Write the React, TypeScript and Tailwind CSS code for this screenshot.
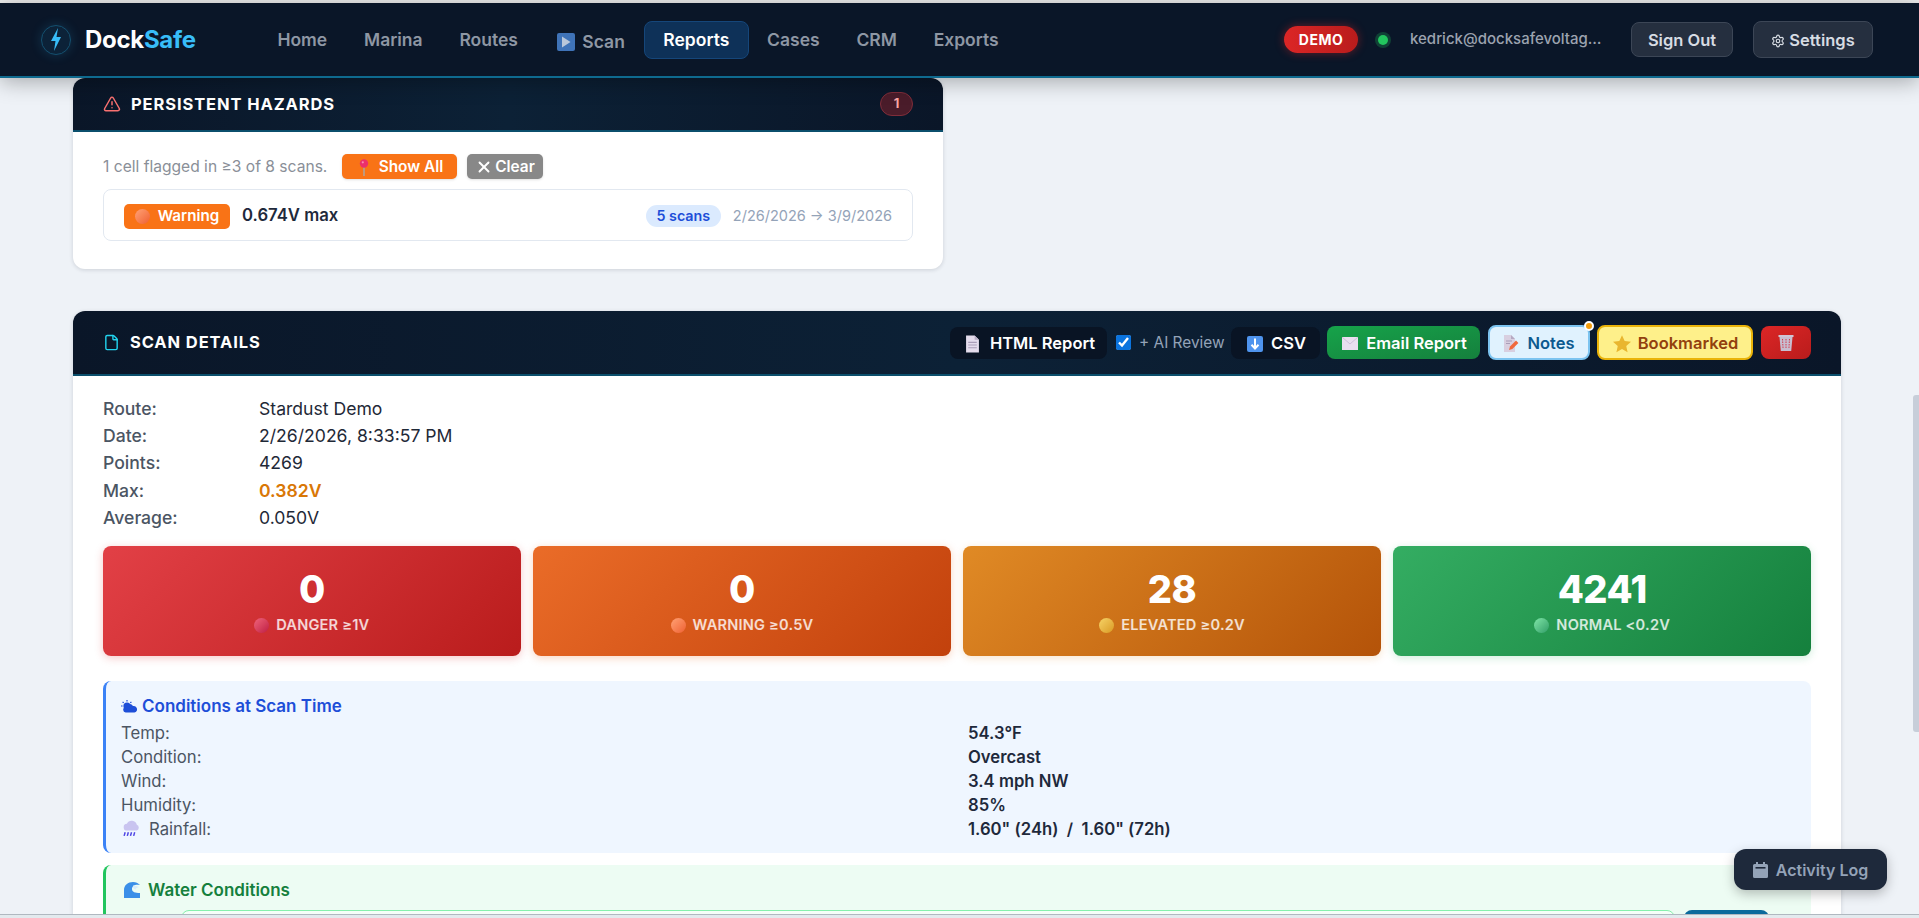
import { File, Settings, TriangleAlert, X } from 'lucide-react';

const navLinks = ['Cases', 'CRM', 'Exports'];

const scanRows = [
  { label: 'Route:', value: 'Stardust Demo', tone: 'text-[#1f2937]' },
  { label: 'Date:', value: '2/26/2026, 8:33:57 PM', tone: 'text-[#1f2937]' },
  { label: 'Points:', value: '4269', tone: 'text-[#1f2937]' },
  { label: 'Max:', value: '0.382V', tone: 'text-[#d97706] font-semibold' },
  { label: 'Average:', value: '0.050V', tone: 'text-[#1f2937]' },
];

const statCards = [
  { count: '0', label: 'DANGER ≥1V', card: 'bg-[linear-gradient(135deg,#e24046,#b91c1c)] shadow-[0_2px_8px_rgba(220,38,38,0.25)]', dot: 'from-[#f0627a] to-[#be1845]' },
  { count: '0', label: 'WARNING ≥0.5V', card: 'bg-[linear-gradient(135deg,#ea6c28,#c2410c)] shadow-[0_2px_8px_rgba(234,88,12,0.25)]', dot: 'from-[#ffa174] to-[#ee5f30]' },
  { count: '28', label: 'ELEVATED ≥0.2V', card: 'bg-[linear-gradient(135deg,#e08a25,#b45309)] shadow-[0_2px_8px_rgba(217,119,6,0.2)]', dot: 'from-[#f6d365] to-[#d99a1e]' },
  { count: '4241', label: 'NORMAL <0.2V', card: 'bg-[linear-gradient(135deg,#34ad62,#15803d)] shadow-[0_2px_8px_rgba(22,163,74,0.2)]', dot: 'from-[#7fe6a8] to-[#2f9e68]' },
];

const weatherRows = [
  { label: 'Temp:', value: '54.3°F' },
  { label: 'Condition:', value: 'Overcast' },
  { label: 'Wind:', value: '3.4 mph NW' },
  { label: 'Humidity:', value: '85%' },
];

function BoltIcon() {
  return (
    <svg width="10" height="23" viewBox="0 0 10 23">
      <path d="M7 0 0 13h4.500L3 23l7-14H5.500z" fill="#38bdf8" />
    </svg>
  );
}

function PlayIcon() {
  return (
    <svg width="18" height="18" viewBox="0 0 18 18">
      <rect width="18" height="18" rx="2" fill="#3f73b8" />
      <path d="M5 3.500 13.500 9 5 14.500z" fill="#b9c7da" />
    </svg>
  );
}

function PinIcon() {
  return (
    <svg width="10" height="17" viewBox="0 0 10 17">
      <path d="M5 8v9" stroke="#a8a8a8" strokeWidth="1.400" />
      <circle cx="5" cy="4.500" r="4.200" fill="#ec2f6b" />
      <circle cx="3.800" cy="3.300" r="1.100" fill="#f98bb0" />
    </svg>
  );
}

function DocIcon() {
  return (
    <svg width="15" height="18" viewBox="0 0 14 16">
      <path d="M1 0h8l4 4v12H1z" fill="#e4dcec" />
      <path d="M9 0l4 4H9z" fill="#b9aec6" />
      <path d="M3 6.500h8M3 9h8M3 11.500h8" stroke="#a99db8" strokeWidth="1" />
    </svg>
  );
}

function DownIcon() {
  return (
    <svg width="16" height="16" viewBox="0 0 16 16">
      <rect width="16" height="16" rx="2" fill="#4f94ee" />
      <path d="M8 2.500V12M4.500 8.800 8 12.500l3.500-3.700" stroke="#fff" strokeWidth="2" fill="none" />
    </svg>
  );
}

function MailIcon() {
  return (
    <svg width="16" height="13" viewBox="0 0 16 13">
      <rect width="16" height="13" fill="#e9dff0" />
      <path d="M0 0l8 7 8-7" stroke="#cdbfd9" strokeWidth="1" fill="none" />
    </svg>
  );
}

function NoteIcon() {
  return (
    <svg width="16" height="17" viewBox="0 0 16 17">
      <path d="M1 0h7l4 4v13H1z" fill="#d8cfe0" />
      <path d="M8 0l4 4H8z" fill="#b5a9c2" />
      <path d="M3 6h6M3 8.500h4" stroke="#a99db8" strokeWidth="1" />
      <path d="M6 15l1-3.500 6-6 2.400 2.400-6 6z" fill="#f0683c" />
    </svg>
  );
}

function StarIcon() {
  return (
    <svg width="20" height="20" viewBox="0 0 24 24">
      <path d="M12 1.500l3.200 7 7.600.8-5.700 5.100 1.600 7.500L12 18.100l-6.700 3.800 1.600-7.500-5.700-5.100 7.600-.8z" fill="#e9b62f" />
    </svg>
  );
}

function TrashIcon() {
  return (
    <svg width="16" height="17" viewBox="0 0 16 17">
      <path d="M0.500 1h15v2h-15z" fill="#cfc5d6" />
      <path d="M1.500 3h13l-1.300 14H2.800z" fill="#c8bdd0" />
      <path d="M4.500 5l.6 10M8 5v10M11.500 5l-.6 10" stroke="#d43a4c" strokeWidth="1" strokeDasharray="1.500 1" />
    </svg>
  );
}

function CloudIcon() {
  return (
    <svg width="17" height="13" viewBox="0 0 17 13">
      <path d="M6 0v1.600M1.600 1.800l1.100 1.100M0 6h1.600M10.400 1.800 9.300 2.900" stroke="#1d4ed8" strokeWidth="1.200" />
      <circle cx="6" cy="6" r="3.600" fill="#1d4ed8" />
      <path d="M5 12.500a2.600 2.600 0 0 1-.4-5.200A4 4 0 0 1 12 6a3.300 3.300 0 0 1 1.400 6.500z" fill="#1d4ed8" />
    </svg>
  );
}

function RainIcon() {
  return (
    <svg width="18" height="18" viewBox="0 0 17 17">
      <path d="M5 10a3.200 3.200 0 0 1-.4-6.400A5 5 0 0 1 14 4.600 2.900 2.900 0 0 1 14 10z" fill="#c9c4f0" />
      <path d="M3 11.500 2 15M6 11.500 5 15M9 11.500 8 15M12 11.500 11 15" stroke="#4f46e5" strokeWidth="1.400" />
    </svg>
  );
}

function WaveIcon() {
  return (
    <svg width="16" height="16" viewBox="0 0 16 16">
      <path d="M0 16V8C0 3 4 0 9 0c3 0 5 1 7 3-4-1-8 0-8 4 0 3 3 4 8 4v5z" fill="#3b8fe8" />
      <path d="M9 3.500c2 0 4 .5 6 1.500-2 .5-3 1-3.500 2.500C10 7 8.500 6 9 3.500z" fill="#d8ecfb" />
    </svg>
  );
}

function CalendarIcon() {
  return (
    <svg width="15" height="16" viewBox="0 0 15 16">
      <path d="M3 0h2v2h5V0h2v2h1.500A1.500 1.500 0 0 1 15 3.500v11a1.500 1.500 0 0 1-1.500 1.500h-12A1.500 1.500 0 0 1 0 14.500v-11A1.500 1.500 0 0 1 1.500 2H3z" fill="#94a3b8" />
      <rect x="2.500" y="5" width="10" height="1.600" fill="#1e293b" />
    </svg>
  );
}

function Ball({ className }: { className: string }) {
  return <span className={`inline-block w-[15px] h-[15px] rounded-full bg-gradient-to-br ${className}`} />;
}

function NavBar() {
  return (
    <header className="relative z-10 h-[75px] shrink-0 flex items-center justify-between bg-[#0a1628] border-b-2 border-[#0e6a8f] shadow-[0_4px_20px_rgba(0,0,0,0.3)]">
      <div className="flex items-center">
        <div className="ml-[41px] w-[30px] h-[30px] rounded-full flex items-center justify-center bg-[#0c2238] border border-[#14506f] shadow-[0_0_12px_rgba(56,189,248,0.18)]">
          <BoltIcon />
        </div>
        <div className="ml-[14px] w-[174px] text-[24px] leading-none font-bold text-white tracking-[-0.3px]">
          Dock<span className="text-[#38bdf8]">Safe</span>
        </div>
        <nav className="flex items-center text-[#8e97a4] text-[17.500px] font-semibold pt-[1px]">
          <a className="px-[18.400px]">Home</a>
          <a className="px-[18.400px]">Marina</a>
          <a className="px-[18.400px]">Routes</a>
          <a className="pl-[21px] pr-[19px] flex items-center gap-[7px] pt-1"><PlayIcon />Scan</a>
          <a className="h-[38px] px-[18.400px] flex items-center rounded-lg bg-[#0e3158] border border-[#15467a] text-white">Reports</a>
          {navLinks.map((link) => (
            <a key={link} className="px-[18.400px]">{link}</a>
          ))}
        </nav>
      </div>
      <div className="flex items-center mr-[46px]">
        <span className="w-[74px] h-[27px] rounded-full flex items-center justify-center bg-gradient-to-r from-[#dc2626] to-[#b91c1c] text-white text-[14px] font-bold tracking-[0.5px] shadow-[0_0_10px_rgba(220,38,38,0.45)]">DEMO</span>
        <span className="ml-[20px] w-[10px] h-[10px] rounded-full bg-[#22c55e] shadow-[0_0_0_3px_rgba(34,197,94,0.25)]" />
        <span className="ml-[22px] w-[196px] truncate text-[15px] text-[#9ca3af] font-medium">kedrick@docksafevoltage.com</span>
        <button className="ml-[25px] w-[102px] h-[35px] rounded-lg bg-[#252f3f] border border-[#3c4656] text-[#d7dce3] text-[16.500px] font-semibold pt-[1px]">Sign Out</button>
        <button className="ml-[20px] w-[120px] h-[37px] rounded-lg bg-[#252f3f] border border-[#3c4656] text-[#d7dce3] text-[16.500px] font-semibold flex items-center justify-center gap-1 pt-[2px]">
          <Settings size={14} />Settings
        </button>
      </div>
    </header>
  );
}

function HazardsCard() {
  return (
    <section className="w-[870px] h-[191px] rounded-xl bg-white shadow-[0_1px_4px_rgba(15,23,42,0.15)] overflow-hidden">
      <div className="h-[54px] flex items-center justify-between pl-[30px] pr-[30px] border-b-2 border-[#0b4f6c] bg-gradient-to-r from-[#0a1628] via-[#0c2136] to-[#0a1628]">
        <div className="flex items-center gap-[10px] text-white text-[16.500px] font-bold tracking-[0.9px]">
          <TriangleAlert size={18} className="text-[#f87171]" />
          PERSISTENT HAZARDS
        </div>
        <span className="w-[33px] h-[24px] rounded-full flex items-center justify-center bg-[#4a1c2a] border border-[#7f2d3a] text-[#fca5a5] text-[13px] font-bold">1</span>
      </div>
      <div className="px-[30px] pt-[22px]">
        <div className="flex items-center h-[25px]">
          <span className="text-[15.600px] text-[#8a8f98] w-[239px] pt-[1px]">1 cell flagged in ≥3 of 8 scans.</span>
          <button className="w-[115px] h-[25px] rounded-[5px] bg-[#f97316] text-white text-[15.400px] font-semibold flex items-center justify-center gap-[10px] pl-[3px] pt-[1px] shadow-sm">
            <PinIcon />Show All
          </button>
          <button className="ml-[10px] w-[76px] h-[25px] rounded-[5px] bg-[#888888] text-white text-[15.400px] font-semibold flex items-center justify-center gap-[2px] pt-[1px] shadow-sm">
            <X size={18} strokeWidth={2.500} />Clear
          </button>
        </div>
        <div className="mt-[10px] h-[52px] rounded-lg border border-[#e2e8f0] flex items-center pl-[20px] pr-[20px] pt-[2px]">
          <span className="w-[106px] h-[25px] rounded-[5px] bg-[#f97316] text-white text-[15.200px] font-semibold flex items-center justify-center gap-[8px]">
            <Ball className="from-[#ffa174] to-[#ee5f30]" />Warning
          </span>
          <span className="ml-[12px] text-[16.700px] font-semibold text-[#1e293b]">0.674V max</span>
          <span className="ml-auto w-[75px] h-[22px] rounded-full bg-[#dbeafe] text-[#1d4ed8] text-[14.300px] font-semibold flex items-center justify-center">5 scans</span>
          <span className="ml-[12px] text-[14.500px] text-[#94a3b8]">2/26/2026 → 3/9/2026</span>
        </div>
      </div>
    </section>
  );
}

function ScanHeader() {
  return (
    <div className="h-[65px] flex items-center justify-between pl-[30px] pr-[30px] border-b-2 border-[#0b4f6c] bg-gradient-to-r from-[#0a1628] via-[#0c2136] to-[#0a1628]">
      <div className="flex items-center gap-[10px] text-white text-[16.500px] font-bold tracking-[0.9px]">
        <File size={17} className="text-[#22d3ee]" />
        SCAN DETAILS
      </div>
      <div className="flex items-center text-[16.500px] font-semibold">
        <button className="w-[157px] h-[32px] rounded-lg bg-[#091424] text-white flex items-center justify-center gap-[10px] pl-[3px] pt-[2px]">
          <DocIcon />HTML Report
        </button>
        <label className="ml-[9px] w-[115px] flex items-center gap-2 text-[15.400px] text-[#94a3b8] font-normal">
          <input type="checkbox" checked readOnly className="w-[15px] h-[15px] accent-[#0b74de]" />
          + AI Review
        </label>
        <button className="w-[89px] h-[32px] rounded-lg bg-[#091424] text-white flex items-center justify-center gap-2 pl-[2px] pt-[2px]">
          <DownIcon />CSV
        </button>
        <button className="ml-[7px] w-[153px] h-[33px] rounded-lg bg-gradient-to-br from-[#16a34a] to-[#15803d] text-white flex items-center justify-center gap-[8px] pl-[2px] pt-[2px]">
          <MailIcon />Email Report
        </button>
        <div className="relative ml-[8px]">
          <button className="w-[102px] h-[35px] rounded-lg bg-[#e0f2fe] border-2 border-[#7cc4f0] text-[#0c5a8f] flex items-center justify-center gap-[8px] pt-[2px]">
            <NoteIcon />Notes
          </button>
          <span className="absolute -top-[4px] -right-[4px] w-[6px] h-[6px] rounded-full bg-[#f59e0b] border-2 border-white box-content" />
        </div>
        <button className="ml-[7px] w-[156px] h-[35px] rounded-lg bg-[#fef08a] border-2 border-[#eab308] text-[#92400e] flex items-center justify-center gap-[6px] pt-[2px]">
          <StarIcon />Bookmarked
        </button>
        <button className="ml-[8px] w-[50px] h-[33px] rounded-lg bg-gradient-to-br from-[#dc2626] to-[#b91c1c] flex items-center justify-center">
          <TrashIcon />
        </button>
      </div>
    </div>
  );
}

function ScanCard() {
  return (
    <section className="mt-[42px] w-[1768px] rounded-t-xl bg-white shadow-[0_1px_4px_rgba(15,23,42,0.15)] overflow-hidden">
      <ScanHeader />
      <div className="px-[30px] pt-[19px]">
        <div className="flex flex-col text-[17.600px] leading-[27.200px]">
          {scanRows.map((row) => (
            <div key={row.label} className="flex">
              <span className="w-[156px] text-[#4b5563] font-medium">{row.label}</span>
              <span className={row.tone}>{row.value}</span>
            </div>
          ))}
        </div>

        <div className="mt-[15px] grid grid-cols-4 gap-[12.500px]">
          {statCards.map((s) => (
            <div key={s.label} className={`h-[110px] rounded-lg flex flex-col items-center text-white ${s.card}`}>
              <div className="mt-[20px] text-[38px] leading-[46px] font-extrabold tracking-[-0.5px]">{s.count}</div>
              <div className="mt-[3px] flex items-center gap-[7px] text-[14.600px] font-semibold text-white/80 tracking-[0.2px]">
                <Ball className={s.dot} />{s.label}
              </div>
            </div>
          ))}
        </div>

        <div className="mt-[25px] h-[172px] rounded-lg bg-[#eff6ff] border-l-[3px] border-[#3b82f6] pl-[15px] pr-[18px] pt-[14px]">
          <div className="flex items-center gap-[4px] text-[17px] leading-[22px] font-semibold text-[#1d4ed8]">
            <CloudIcon />Conditions at Scan Time
          </div>
          <div className="mt-[4px] grid grid-cols-2 gap-x-[22px] text-[16.700px] leading-[24px]">
            {weatherRows.map((row) => (
              <div key={row.label} className="contents">
                <span className="text-[#4b5563]">{row.label}</span>
                <span className="font-semibold text-[#1e293b]">{row.value}</span>
              </div>
            ))}
            <span className="flex items-center gap-[9px] pl-[1px] text-[#4b5563]"><RainIcon />Rainfall:</span>
            <span className="font-semibold text-[#1e293b]">1.60" (24h)&nbsp; /&nbsp; 1.60" (72h)</span>
          </div>
        </div>

        <div className="mt-[12px] h-[120px] rounded-t-lg bg-[#edfcf3] border-l-[3px] border-[#22c55e] pl-[18px] pt-[14px]">
          <div className="flex items-center gap-[8px] text-[17px] leading-[22px] font-semibold text-[#15803d]">
            <WaveIcon />Water Conditions
          </div>
          <div className="mt-[9px] flex gap-[9px]">
            <div className="ml-[57px] w-[1494px] h-[60px] rounded-t-lg border-[1.500px] border-[#86efac] bg-[#f5fef8]" />
            <div className="w-[85px] h-[60px] rounded-t-lg bg-[#0b6a9c]" />
          </div>
        </div>
      </div>
    </section>
  );
}

export default function App() {
  return (
    <div className="relative w-[1919px] h-[918px] overflow-hidden flex flex-col bg-[#eef2f7] font-['Inter',sans-serif]">
      <div className="h-[3px] shrink-0 bg-[#ececec]" />
      <NavBar />
      <main className="flex-1 overflow-hidden pl-[73px]">
        <HazardsCard />
        <ScanCard />
      </main>
      <div className="h-[4px] shrink-0 relative z-10 bg-[#e3eaee] border-t border-[#b0b8c0]" />

      <button className="absolute left-[1734px] top-[849px] z-20 w-[153px] h-[41px] rounded-xl bg-[#1e293b] text-[#94a3b8] text-[16px] font-semibold flex items-center justify-center gap-[8px] shadow-[0_4px_12px_rgba(0,0,0,0.25)]">
        <CalendarIcon />Activity Log
      </button>
      <div className="absolute left-[1913px] top-[395px] w-[6px] h-[337px] rounded-l-[3px] bg-[#c7ced9]" />
    </div>
  );
}
